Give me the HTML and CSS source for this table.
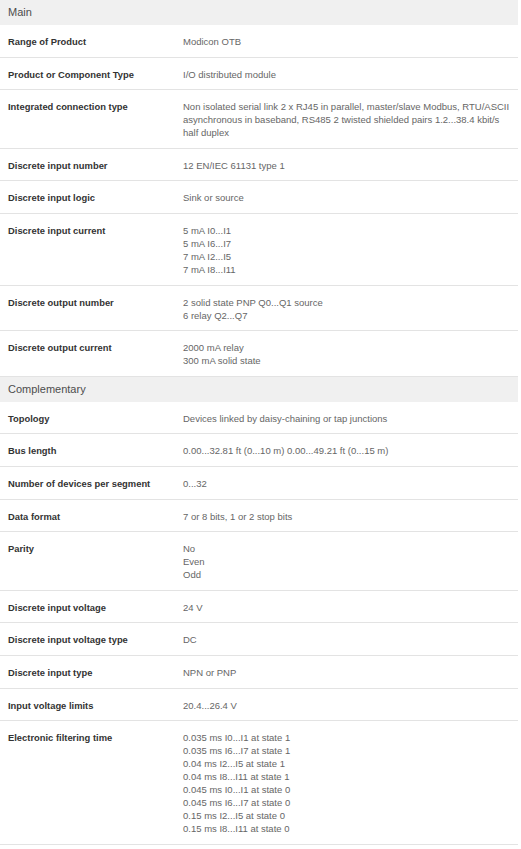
FILE: index.html
```html
<!DOCTYPE html>
<html>
<head>
<meta charset="utf-8">
<link rel="stylesheet" href="styles.css">
</head>
<body>
<div class="specs">
  <div class="section-head">Main</div>
  <div class="row"><div class="label">Range of Product</div><div class="value">Modicon OTB</div></div>
  <div class="row"><div class="label">Product or Component Type</div><div class="value">I/O distributed module</div></div>
  <div class="row"><div class="label">Integrated connection type</div><div class="value">Non isolated serial link 2 x RJ45 in parallel, master/slave Modbus, RTU/ASCII<br>asynchronous in baseband, RS485 2 twisted shielded pairs 1.2...38.4 kbit/s<br>half duplex</div></div>
  <div class="row"><div class="label">Discrete input number</div><div class="value">12 EN/IEC 61131 type 1</div></div>
  <div class="row"><div class="label">Discrete input logic</div><div class="value">Sink or source</div></div>
  <div class="row"><div class="label">Discrete input current</div><div class="value">5 mA I0...I1<br>5 mA I6...I7<br>7 mA I2...I5<br>7 mA I8...I11</div></div>
  <div class="row"><div class="label">Discrete output number</div><div class="value">2 solid state PNP Q0...Q1 source<br>6 relay Q2...Q7</div></div>
  <div class="row"><div class="label">Discrete output current</div><div class="value">2000 mA relay<br>300 mA solid state</div></div>
  <div class="section-head">Complementary</div>
  <div class="row"><div class="label">Topology</div><div class="value">Devices linked by daisy-chaining or tap junctions</div></div>
  <div class="row"><div class="label">Bus length</div><div class="value">0.00...32.81 ft (0...10 m) 0.00...49.21 ft (0...15 m)</div></div>
  <div class="row"><div class="label">Number of devices per segment</div><div class="value">0...32</div></div>
  <div class="row"><div class="label">Data format</div><div class="value">7 or 8 bits, 1 or 2 stop bits</div></div>
  <div class="row"><div class="label">Parity</div><div class="value">No<br>Even<br>Odd</div></div>
  <div class="row"><div class="label">Discrete input voltage</div><div class="value">24 V</div></div>
  <div class="row"><div class="label">Discrete input voltage type</div><div class="value">DC</div></div>
  <div class="row"><div class="label">Discrete input type</div><div class="value">NPN or PNP</div></div>
  <div class="row"><div class="label">Input voltage limits</div><div class="value">20.4...26.4 V</div></div>
  <div class="row"><div class="label">Electronic filtering time</div><div class="value">0.035 ms I0...I1 at state 1<br>0.035 ms I6...I7 at state 1<br>0.04 ms I2...I5 at state 1<br>0.04 ms I8...I11 at state 1<br>0.045 ms I0...I1 at state 0<br>0.045 ms I6...I7 at state 0<br>0.15 ms I2...I5 at state 0<br>0.15 ms I8...I11 at state 0</div></div>
</div>
</body>
</html>
```

FILE: styles.css
```css
html, body {
  margin: 0;
  padding: 0;
  background: #ffffff;
}
body {
  font-family: "Liberation Sans", Arial, sans-serif;
}
.specs {
  width: 518px;
}
.section-head {
  height: 25px;
  line-height: 24px;
  background: #f0f0f0;
  color: #4d4d4d;
  font-size: 11px;
  padding: 0 8px;
}
.row {
  display: grid;
  grid-template-columns: 175px 1fr;
  padding: 10px 0 8.6px;
  border-bottom: 1px solid #e3e3e3;
  line-height: 13px;
}
.label {
  padding-left: 8px;
  font-size: 9.4px;
  font-weight: bold;
  color: #333333;
}
.value {
  padding-left: 8px;
  font-size: 9.5px;
  color: #666666;
  white-space: nowrap;
}
```
